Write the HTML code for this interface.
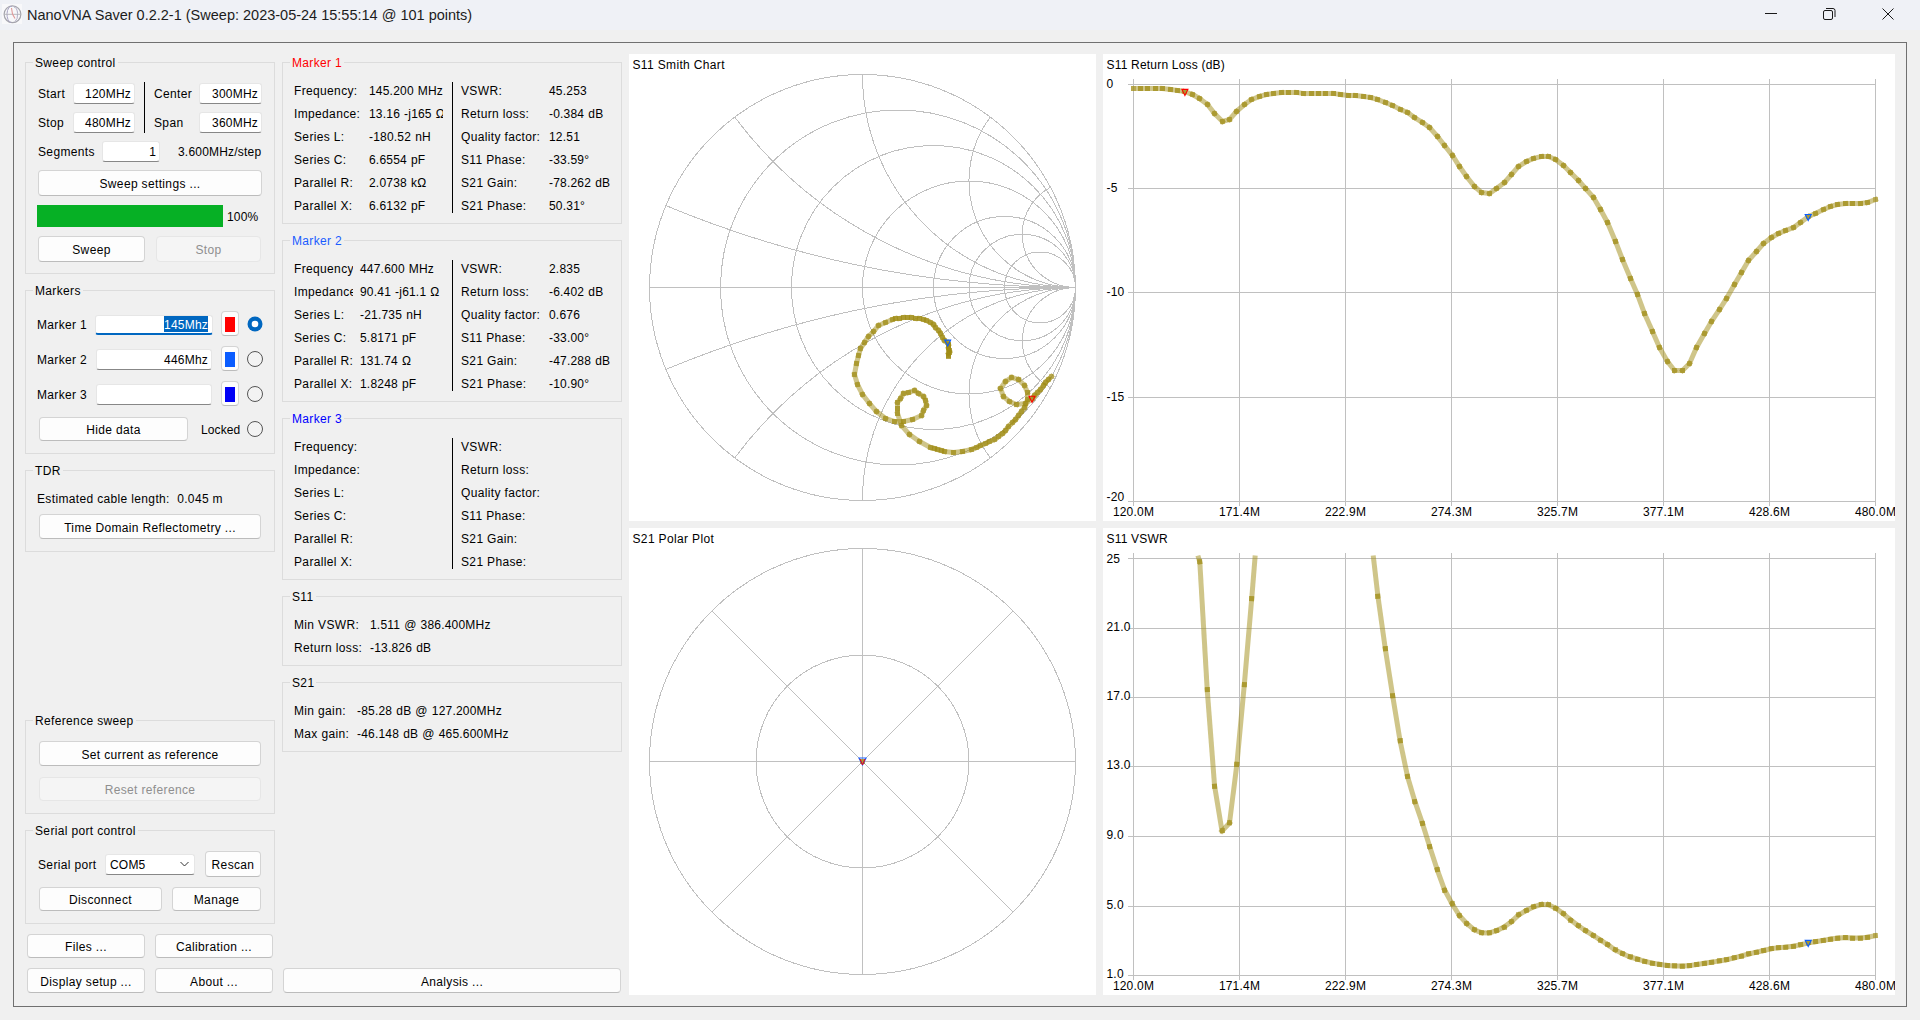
<!DOCTYPE html>
<html><head><meta charset="utf-8"><title>NanoVNA Saver</title><style>
*{box-sizing:border-box;margin:0;padding:0}
html,body{width:1920px;height:1020px;overflow:hidden;background:#f0f0f0;font-family:"Liberation Sans",sans-serif;font-size:12px;color:#000}
.t{position:absolute;line-height:14px;height:14px;white-space:pre;letter-spacing:0.35px}
.n{letter-spacing:0.2px;word-spacing:0.5px}
.gb{position:absolute;border:1px solid #dcdcdc}
.gt{background:#f0f0f0}
.btn{position:absolute;background:#fdfdfd;border:1px solid #d4d4d4;border-bottom-color:#bcbcbc;border-radius:4px}
.btn.dis{background:#f5f5f5;border-color:#e6e6e6}
.dtx{color:#8f8f8f}
.le{position:absolute;background:#fff;border:1px solid #e6e6e6;border-bottom:1px solid #878787;border-radius:3px}
.le.foc{border-bottom:2px solid #0067c0}
.chart{position:absolute;background:#fff}
svg{position:absolute;left:0;top:0}
</style></head><body>
<div style="position:absolute;left:0;top:0;width:1920px;height:30px;background:#eff1f6"></div>
<svg width="26" height="30" style="left:0;top:0"><rect x="2" y="4" width="20" height="20" fill="#f8f8fa"/>
<circle cx="12.5" cy="14.3" r="8.4" fill="none" stroke="#a4a4ac" stroke-width="1.2"/>
<path d="M12 6.2 A4.5 8.2 0 0 0 11 22.5" fill="none" stroke="#a8a4c4" stroke-width="1"/>
<path d="M14 7 A4 7.5 0 0 1 15 21.5" fill="none" stroke="#b4b0c8" stroke-width="1"/>
<path d="M4.5 14.3 H20.5" fill="none" stroke="#b0b0b6" stroke-width="0.9"/>
<path d="M11.5 8 L12.5 14 L15 18.5" fill="none" stroke="#e09a9a" stroke-width="1.1"/></svg>
<div class="t" style="left:27px;top:6px;font-size:14.5px;line-height:18px;height:18px;letter-spacing:0;color:#1c1c1c">NanoVNA Saver 0.2.2-1 (Sweep: 2023-05-24 15:55:14 @ 101 points)</div>
<svg width="1920" height="30" style="left:0;top:0">
<line x1="1765" y1="13.5" x2="1777" y2="13.5" stroke="#1a1a1a" stroke-width="1"/>
<rect x="1823.5" y="10.5" width="9" height="9" rx="1.5" fill="none" stroke="#1a1a1a" stroke-width="1"/>
<path d="M1826 8.5 H1833 Q1835 8.5 1835 10.5 V17" fill="none" stroke="#1a1a1a" stroke-width="1"/>
<path d="M1882.5 8.5 L1893.5 19.5 M1893.5 8.5 L1882.5 19.5" stroke="#1a1a1a" stroke-width="1"/>
</svg>
<div style="position:absolute;left:13px;top:42px;width:1894px;height:965px;border:1px solid #707070"></div>
<div class="gb" style="left:25px;top:62px;width:250px;height:212px;"></div><div class="t gt" style="left:33px;top:56px;padding:0 2px;">Sweep control</div>
<div class="t " style="left:38px;top:87px;">Start</div>
<div class="le" style="left:73px;top:83px;width:62px;height:21px;"></div>
<div class="t n" style="left:11px;top:87px;width:120px;text-align:right;">120MHz</div>
<div class="t " style="left:38px;top:116px;">Stop</div>
<div class="le" style="left:73px;top:112px;width:62px;height:21px;"></div>
<div class="t n" style="left:11px;top:116px;width:120px;text-align:right;">480MHz</div>
<div style="position:absolute;left:144px;top:82px;width:1px;height:51px;background:#000"></div>
<div class="t " style="left:154px;top:87px;">Center</div>
<div class="le" style="left:199px;top:83px;width:63px;height:21px;"></div>
<div class="t n" style="left:138px;top:87px;width:120px;text-align:right;">300MHz</div>
<div class="t " style="left:154px;top:116px;">Span</div>
<div class="le" style="left:199px;top:112px;width:63px;height:21px;"></div>
<div class="t n" style="left:138px;top:116px;width:120px;text-align:right;">360MHz</div>
<div class="t " style="left:38px;top:145px;">Segments</div>
<div class="le" style="left:102px;top:141px;width:58px;height:21px;"></div>
<div class="t n" style="left:36px;top:145px;width:120px;text-align:right;">1</div>
<div class="t n" style="left:178px;top:145px;">3.600MHz/step</div>
<div class="btn" style="left:38px;top:170px;width:224px;height:26px;"></div><div class="t " style="left:38px;top:177px;width:224px;text-align:center;">Sweep settings ...</div>
<div style="position:absolute;left:37px;top:205px;width:186px;height:22px;background:#06b025"></div>
<div class="t n" style="left:227px;top:210px;">100%</div>
<div class="btn" style="left:38px;top:236px;width:107px;height:26px;"></div><div class="t " style="left:38px;top:243px;width:107px;text-align:center;">Sweep</div>
<div class="btn dis" style="left:156px;top:236px;width:105px;height:26px;"></div><div class="t dtx" style="left:156px;top:243px;width:105px;text-align:center;">Stop</div>
<div class="gb" style="left:25px;top:290px;width:250px;height:164px;"></div><div class="t gt" style="left:33px;top:284px;padding:0 2px;">Markers</div>
<div class="t " style="left:37px;top:318px;">Marker 1</div>
<div class="le foc" style="left:95px;top:315px;width:118px;height:20px;"></div>
<div style="position:absolute;left:164px;top:316px;width:44px;height:16px;background:#0067c0"></div>
<div class="t n" style="left:88px;top:318px;width:120px;text-align:right;color:#fff;">145Mhz</div>
<div class="t " style="left:37px;top:353px;">Marker 2</div>
<div class="le" style="left:96px;top:349px;width:116px;height:21px;"></div>
<div class="t n" style="left:88px;top:353px;width:120px;text-align:right;">446Mhz</div>
<div class="t " style="left:37px;top:388px;">Marker 3</div>
<div class="le" style="left:96px;top:384px;width:116px;height:21px;"></div>
<div class="btn" style="left:221px;top:311px;width:18px;height:25px;"></div>
<div class="" style="left:225px;top:317px;width:10px;height:15px;position:absolute;background:#ff0000"></div>
<div class="btn" style="left:221px;top:346px;width:18px;height:25px;"></div>
<div class="" style="left:225px;top:352px;width:10px;height:15px;position:absolute;background:#0a5cff"></div>
<div class="btn" style="left:221px;top:381px;width:18px;height:25px;"></div>
<div class="" style="left:225px;top:387px;width:10px;height:15px;position:absolute;background:#0000f5"></div>
<svg width="300" height="460" style="left:0;top:0">
<circle cx="255" cy="324" r="7.5" fill="#0067c0"/><circle cx="255" cy="324" r="3.3" fill="#fff"/>
<circle cx="255" cy="359" r="7.5" fill="#f3f3f3" stroke="#555" stroke-width="1"/>
<circle cx="255" cy="394" r="7.5" fill="#f3f3f3" stroke="#555" stroke-width="1"/>
<circle cx="255" cy="429" r="7.5" fill="#f3f3f3" stroke="#555" stroke-width="1"/>
</svg>
<div class="btn" style="left:39px;top:417px;width:149px;height:24px;"></div><div class="t " style="left:39px;top:423px;width:149px;text-align:center;">Hide data</div>
<div class="t " style="left:201px;top:423px;letter-spacing:0.1px">Locked</div>
<div class="gb" style="left:25px;top:470px;width:250px;height:82px;"></div><div class="t gt" style="left:33px;top:464px;padding:0 2px;">TDR</div>
<div class="t " style="left:37px;top:492px;">Estimated cable length:  0.045 m</div>
<div class="btn" style="left:39px;top:514px;width:222px;height:25px;"></div><div class="t " style="left:39px;top:521px;width:222px;text-align:center;">Time Domain Reflectometry ...</div>
<div class="gb" style="left:25px;top:720px;width:250px;height:94px;"></div><div class="t gt" style="left:33px;top:714px;padding:0 2px;">Reference sweep</div>
<div class="btn" style="left:39px;top:741px;width:222px;height:25px;"></div><div class="t " style="left:39px;top:748px;width:222px;text-align:center;">Set current as reference</div>
<div class="btn dis" style="left:39px;top:777px;width:222px;height:24px;"></div><div class="t dtx" style="left:39px;top:783px;width:222px;text-align:center;">Reset reference</div>
<div class="gb" style="left:25px;top:830px;width:250px;height:94px;"></div><div class="t gt" style="left:33px;top:824px;padding:0 2px;">Serial port control</div>
<div class="t " style="left:38px;top:858px;">Serial port</div>
<div class="le" style="left:105px;top:854px;width:90px;height:21px;"></div>
<div class="t n" style="left:110px;top:858px;">COM5</div>
<svg width="300" height="1020" style="left:0;top:0"><path d="M180.5 862 L184.5 866 L188.5 862" fill="none" stroke="#333" stroke-width="1"/></svg>
<div class="btn" style="left:205px;top:851px;width:56px;height:26px;"></div><div class="t " style="left:205px;top:858px;width:56px;text-align:center;">Rescan</div>
<div class="btn" style="left:39px;top:887px;width:123px;height:24px;"></div><div class="t " style="left:39px;top:893px;width:123px;text-align:center;">Disconnect</div>
<div class="btn" style="left:172px;top:887px;width:89px;height:24px;"></div><div class="t " style="left:172px;top:893px;width:89px;text-align:center;">Manage</div>
<div class="btn" style="left:27px;top:934px;width:118px;height:24px;"></div><div class="t " style="left:27px;top:940px;width:118px;text-align:center;">Files ...</div>
<div class="btn" style="left:155px;top:934px;width:118px;height:24px;"></div><div class="t " style="left:155px;top:940px;width:118px;text-align:center;">Calibration ...</div>
<div class="btn" style="left:27px;top:968px;width:118px;height:25px;"></div><div class="t " style="left:27px;top:975px;width:118px;text-align:center;">Display setup ...</div>
<div class="btn" style="left:155px;top:968px;width:118px;height:25px;"></div><div class="t " style="left:155px;top:975px;width:118px;text-align:center;">About ...</div>
<div class="btn" style="left:283px;top:968px;width:338px;height:25px;"></div><div class="t " style="left:283px;top:975px;width:338px;text-align:center;">Analysis ...</div>
<div class="gb" style="left:282px;top:62px;width:340px;height:162px;"></div><div class="t gt" style="left:290px;top:56px;padding:0 2px;color:#ff0000;">Marker 1</div><div class="t " style="left:294px;top:84px;">Frequency:</div><div class="t n" style="left:369px;top:84px;">145.200 MHz</div><div class="t " style="left:294px;top:107px;">Impedance:</div><div style="position:absolute;left:369px;top:107px;width:74px;height:16px;overflow:hidden"><div class="t n" style="left:0px;top:0px;">13.16 -j165 Ω</div></div><div class="t " style="left:294px;top:130px;">Series L:</div><div class="t n" style="left:369px;top:130px;">-180.52 nH</div><div class="t " style="left:294px;top:153px;">Series C:</div><div class="t n" style="left:369px;top:153px;">6.6554 pF</div><div class="t " style="left:294px;top:176px;">Parallel R:</div><div class="t n" style="left:369px;top:176px;">2.0738 kΩ</div><div class="t " style="left:294px;top:199px;">Parallel X:</div><div class="t n" style="left:369px;top:199px;">6.6132 pF</div><div class="t " style="left:461px;top:84px;">VSWR:</div><div class="t n" style="left:549px;top:84px;">45.253</div><div class="t " style="left:461px;top:107px;">Return loss:</div><div class="t n" style="left:549px;top:107px;">-0.384 dB</div><div class="t " style="left:461px;top:130px;">Quality factor:</div><div class="t n" style="left:549px;top:130px;">12.51</div><div class="t " style="left:461px;top:153px;">S11 Phase:</div><div class="t n" style="left:549px;top:153px;">-33.59°</div><div class="t " style="left:461px;top:176px;">S21 Gain:</div><div class="t n" style="left:549px;top:176px;">-78.262 dB</div><div class="t " style="left:461px;top:199px;">S21 Phase:</div><div class="t n" style="left:549px;top:199px;">50.31°</div><div style="position:absolute;left:452px;top:82px;width:1px;height:131px;background:#000"></div>
<div class="gb" style="left:282px;top:240px;width:340px;height:162px;"></div><div class="t gt" style="left:290px;top:234px;padding:0 2px;color:#1a5cff;">Marker 2</div><div style="position:absolute;left:294px;top:262px;width:59px;height:16px;overflow:hidden"><div class="t " style="left:0px;top:0px;">Frequency:</div></div><div class="t n" style="left:360px;top:262px;">447.600 MHz</div><div style="position:absolute;left:294px;top:285px;width:59px;height:16px;overflow:hidden"><div class="t " style="left:0px;top:0px;">Impedance:</div></div><div class="t n" style="left:360px;top:285px;">90.41 -j61.1 Ω</div><div style="position:absolute;left:294px;top:308px;width:59px;height:16px;overflow:hidden"><div class="t " style="left:0px;top:0px;">Series L:</div></div><div class="t n" style="left:360px;top:308px;">-21.735 nH</div><div style="position:absolute;left:294px;top:331px;width:59px;height:16px;overflow:hidden"><div class="t " style="left:0px;top:0px;">Series C:</div></div><div class="t n" style="left:360px;top:331px;">5.8171 pF</div><div style="position:absolute;left:294px;top:354px;width:59px;height:16px;overflow:hidden"><div class="t " style="left:0px;top:0px;">Parallel R:</div></div><div class="t n" style="left:360px;top:354px;">131.74 Ω</div><div style="position:absolute;left:294px;top:377px;width:59px;height:16px;overflow:hidden"><div class="t " style="left:0px;top:0px;">Parallel X:</div></div><div class="t n" style="left:360px;top:377px;">1.8248 pF</div><div class="t " style="left:461px;top:262px;">VSWR:</div><div class="t n" style="left:549px;top:262px;">2.835</div><div class="t " style="left:461px;top:285px;">Return loss:</div><div class="t n" style="left:549px;top:285px;">-6.402 dB</div><div class="t " style="left:461px;top:308px;">Quality factor:</div><div class="t n" style="left:549px;top:308px;">0.676</div><div class="t " style="left:461px;top:331px;">S11 Phase:</div><div class="t n" style="left:549px;top:331px;">-33.00°</div><div class="t " style="left:461px;top:354px;">S21 Gain:</div><div class="t n" style="left:549px;top:354px;">-47.288 dB</div><div class="t " style="left:461px;top:377px;">S21 Phase:</div><div class="t n" style="left:549px;top:377px;">-10.90°</div><div style="position:absolute;left:452px;top:260px;width:1px;height:131px;background:#000"></div>
<div class="gb" style="left:282px;top:418px;width:340px;height:162px;"></div><div class="t gt" style="left:290px;top:412px;padding:0 2px;color:#0000ff;">Marker 3</div><div class="t " style="left:294px;top:440px;">Frequency:</div><div class="t " style="left:294px;top:463px;">Impedance:</div><div class="t " style="left:294px;top:486px;">Series L:</div><div class="t " style="left:294px;top:509px;">Series C:</div><div class="t " style="left:294px;top:532px;">Parallel R:</div><div class="t " style="left:294px;top:555px;">Parallel X:</div><div class="t " style="left:461px;top:440px;">VSWR:</div><div class="t " style="left:461px;top:463px;">Return loss:</div><div class="t " style="left:461px;top:486px;">Quality factor:</div><div class="t " style="left:461px;top:509px;">S11 Phase:</div><div class="t " style="left:461px;top:532px;">S21 Gain:</div><div class="t " style="left:461px;top:555px;">S21 Phase:</div><div style="position:absolute;left:452px;top:438px;width:1px;height:131px;background:#000"></div>
<div class="gb" style="left:282px;top:596px;width:340px;height:70px;"></div><div class="t gt" style="left:290px;top:590px;padding:0 2px;">S11</div>
<div class="t " style="left:294px;top:618px;">Min VSWR:</div>
<div class="t n" style="left:370px;top:618px;">1.511 @ 386.400MHz</div>
<div class="t " style="left:294px;top:641px;">Return loss:</div>
<div class="t n" style="left:370px;top:641px;">-13.826 dB</div>
<div class="gb" style="left:282px;top:682px;width:340px;height:70px;"></div><div class="t gt" style="left:290px;top:676px;padding:0 2px;">S21</div>
<div class="t " style="left:294px;top:704px;">Min gain:</div>
<div class="t n" style="left:357px;top:704px;">-85.28 dB @ 127.200MHz</div>
<div class="t " style="left:294px;top:727px;">Max gain:</div>
<div class="t n" style="left:357px;top:727px;">-46.148 dB @ 465.600MHz</div>
<div class="chart" style="left:629px;top:54px;width:467px;height:467px"></div>
<svg width="1920" height="1020" style="left:0;top:0;font-family:'Liberation Sans',sans-serif;font-size:12px;letter-spacing:0.35px"><text x="632.5" y="68.8" text-anchor="start" >S11 Smith Chart</text><g stroke="#c0c0c0" stroke-width="1" fill="none" shape-rendering="crispEdges"><circle cx="862.5" cy="287.5" r="213.0"/><line x1="649.5" y1="287.5" x2="1075.5" y2="287.5"/><circle cx="898.00" cy="287.5" r="177.50"/><circle cx="933.50" cy="287.5" r="142.00"/><circle cx="969.00" cy="287.5" r="106.50"/><circle cx="1004.50" cy="287.5" r="71.00"/><circle cx="1022.25" cy="287.5" r="53.25"/><circle cx="1040.00" cy="287.5" r="35.50"/><path d="M1075.5 287.5 A1065.00 1065.00 0 0 1 665.88 205.58"/><path d="M1075.5 287.5 A1065.00 1065.00 0 0 0 665.88 369.42"/><path d="M1075.5 287.5 A426.00 426.00 0 0 1 734.70 117.10"/><path d="M1075.5 287.5 A426.00 426.00 0 0 0 734.70 457.90"/><path d="M1075.5 287.5 A213.00 213.00 0 0 1 862.50 74.50"/><path d="M1075.5 287.5 A213.00 213.00 0 0 0 862.50 500.50"/><path d="M1075.5 287.5 A106.50 106.50 0 0 1 990.30 117.10"/><path d="M1075.5 287.5 A106.50 106.50 0 0 0 990.30 457.90"/><path d="M1075.5 287.5 A53.25 53.25 0 0 1 1050.44 187.26"/><path d="M1075.5 287.5 A53.25 53.25 0 0 0 1050.44 387.74"/></g><g stroke="rgba(160,140,20,0.5)" stroke-width="5" stroke-linecap="square" fill="none"><line x1="1051.5" y1="376.5" x2="1048.5" y2="379.5"/><line x1="1048.5" y1="379.5" x2="1045.5" y2="382.5"/><line x1="1045.5" y1="382.5" x2="1043.5" y2="385.5"/><line x1="1043.5" y1="385.5" x2="1040.5" y2="389.5"/><line x1="1040.5" y1="389.5" x2="1037.5" y2="392.5"/><line x1="1037.5" y1="392.5" x2="1034.5" y2="395.5"/><line x1="1034.5" y1="395.5" x2="1032.5" y2="398.5"/><line x1="1032.5" y1="398.5" x2="1025.5" y2="403.5"/><line x1="1025.5" y1="403.5" x2="1016.5" y2="404.5"/><line x1="1016.5" y1="404.5" x2="1009.5" y2="401.5"/><line x1="1009.5" y1="401.5" x2="1003.5" y2="396.5"/><line x1="1003.5" y1="396.5" x2="1000.5" y2="388.5"/><line x1="1000.5" y1="388.5" x2="1005.5" y2="381.5"/><line x1="1005.5" y1="381.5" x2="1011.5" y2="377.5"/><line x1="1011.5" y1="377.5" x2="1018.5" y2="379.5"/><line x1="1018.5" y1="379.5" x2="1024.5" y2="385.5"/><line x1="1024.5" y1="385.5" x2="1027.5" y2="392.5"/><line x1="1027.5" y1="392.5" x2="1027.5" y2="399.5"/><line x1="1027.5" y1="399.5" x2="1024.5" y2="407.5"/><line x1="1024.5" y1="407.5" x2="1021.5" y2="411.5"/><line x1="1021.5" y1="411.5" x2="1018.5" y2="415.5"/><line x1="1018.5" y1="415.5" x2="1015.5" y2="419.5"/><line x1="1015.5" y1="419.5" x2="1012.5" y2="422.5"/><line x1="1012.5" y1="422.5" x2="1008.5" y2="426.5"/><line x1="1008.5" y1="426.5" x2="1005.5" y2="430.5"/><line x1="1005.5" y1="430.5" x2="1002.5" y2="433.5"/><line x1="1002.5" y1="433.5" x2="998.5" y2="436.5"/><line x1="998.5" y1="436.5" x2="994.5" y2="439.5"/><line x1="994.5" y1="439.5" x2="989.5" y2="441.5"/><line x1="989.5" y1="441.5" x2="985.5" y2="443.5"/><line x1="985.5" y1="443.5" x2="980.5" y2="445.5"/><line x1="980.5" y1="445.5" x2="976.5" y2="447.5"/><line x1="976.5" y1="447.5" x2="971.5" y2="449.5"/><line x1="971.5" y1="449.5" x2="962.5" y2="451.5"/><line x1="962.5" y1="451.5" x2="953.5" y2="452.5"/><line x1="953.5" y1="452.5" x2="944.5" y2="451.5"/><line x1="944.5" y1="451.5" x2="941.5" y2="450.5"/><line x1="941.5" y1="450.5" x2="937.5" y2="449.5"/><line x1="937.5" y1="449.5" x2="934.5" y2="448.5"/><line x1="934.5" y1="448.5" x2="930.5" y2="447.5"/><line x1="930.5" y1="447.5" x2="919.5" y2="441.5"/><line x1="919.5" y1="441.5" x2="909.5" y2="434.5"/><line x1="909.5" y1="434.5" x2="901.5" y2="425.5"/><line x1="901.5" y1="425.5" x2="897.5" y2="413.5"/><line x1="897.5" y1="413.5" x2="897.5" y2="408.5"/><line x1="897.5" y1="408.5" x2="897.5" y2="402.5"/><line x1="897.5" y1="402.5" x2="900.5" y2="398.5"/><line x1="900.5" y1="398.5" x2="903.5" y2="393.5"/><line x1="903.5" y1="393.5" x2="908.5" y2="392.5"/><line x1="908.5" y1="392.5" x2="914.5" y2="390.5"/><line x1="914.5" y1="390.5" x2="918.5" y2="393.5"/><line x1="918.5" y1="393.5" x2="923.5" y2="396.5"/><line x1="923.5" y1="396.5" x2="925.5" y2="400.5"/><line x1="925.5" y1="400.5" x2="926.5" y2="405.5"/><line x1="926.5" y1="405.5" x2="923.5" y2="410.5"/><line x1="923.5" y1="410.5" x2="921.5" y2="415.5"/><line x1="921.5" y1="415.5" x2="912.5" y2="419.5"/><line x1="912.5" y1="419.5" x2="903.5" y2="421.5"/><line x1="903.5" y1="421.5" x2="894.5" y2="421.5"/><line x1="894.5" y1="421.5" x2="885.5" y2="418.5"/><line x1="885.5" y1="418.5" x2="876.5" y2="411.5"/><line x1="876.5" y1="411.5" x2="869.5" y2="403.5"/><line x1="869.5" y1="403.5" x2="862.5" y2="394.5"/><line x1="862.5" y1="394.5" x2="857.5" y2="384.5"/><line x1="857.5" y1="384.5" x2="854.5" y2="374.5"/><line x1="854.5" y1="374.5" x2="856.5" y2="363.5"/><line x1="856.5" y1="363.5" x2="858.5" y2="355.5"/><line x1="858.5" y1="355.5" x2="860.5" y2="348.5"/><line x1="860.5" y1="348.5" x2="864.5" y2="342.5"/><line x1="864.5" y1="342.5" x2="868.5" y2="336.5"/><line x1="868.5" y1="336.5" x2="873.5" y2="331.5"/><line x1="873.5" y1="331.5" x2="878.5" y2="325.5"/><line x1="878.5" y1="325.5" x2="885.5" y2="322.5"/><line x1="885.5" y1="322.5" x2="892.5" y2="319.5"/><line x1="892.5" y1="319.5" x2="895.5" y2="318.5"/><line x1="895.5" y1="318.5" x2="899.5" y2="318.5"/><line x1="899.5" y1="318.5" x2="903.5" y2="317.5"/><line x1="903.5" y1="317.5" x2="907.5" y2="317.5"/><line x1="907.5" y1="317.5" x2="911.5" y2="317.5"/><line x1="911.5" y1="317.5" x2="915.5" y2="318.5"/><line x1="915.5" y1="318.5" x2="919.5" y2="318.5"/><line x1="919.5" y1="318.5" x2="923.5" y2="319.5"/><line x1="923.5" y1="319.5" x2="926.5" y2="320.5"/><line x1="926.5" y1="320.5" x2="930.5" y2="322.5"/><line x1="930.5" y1="322.5" x2="933.5" y2="324.5"/><line x1="933.5" y1="324.5" x2="935.5" y2="327.5"/><line x1="935.5" y1="327.5" x2="938.5" y2="330.5"/><line x1="938.5" y1="330.5" x2="940.5" y2="333.5"/><line x1="940.5" y1="333.5" x2="942.5" y2="337.5"/><line x1="942.5" y1="337.5" x2="944.5" y2="340.5"/><line x1="944.5" y1="340.5" x2="947.5" y2="342.5"/><line x1="947.5" y1="342.5" x2="948.5" y2="344.5"/><line x1="948.5" y1="344.5" x2="948.5" y2="345.5"/><line x1="948.5" y1="345.5" x2="948.5" y2="347.5"/><line x1="948.5" y1="347.5" x2="948.5" y2="348.5"/><line x1="948.5" y1="348.5" x2="949.5" y2="350.5"/><line x1="949.5" y1="350.5" x2="949.5" y2="352.5"/><line x1="949.5" y1="352.5" x2="948.5" y2="353.5"/><line x1="948.5" y1="353.5" x2="948.5" y2="355.5"/><line x1="948.5" y1="355.5" x2="948.5" y2="356.5"/></g><g fill="rgba(160,140,20,0.5)" shape-rendering="crispEdges"><rect x="1049" y="374" width="5" height="5"/><rect x="1046" y="377" width="5" height="5"/><rect x="1043" y="380" width="5" height="5"/><rect x="1041" y="383" width="5" height="5"/><rect x="1038" y="387" width="5" height="5"/><rect x="1035" y="390" width="5" height="5"/><rect x="1032" y="393" width="5" height="5"/><rect x="1030" y="396" width="5" height="5"/><rect x="1023" y="401" width="5" height="5"/><rect x="1014" y="402" width="5" height="5"/><rect x="1007" y="399" width="5" height="5"/><rect x="1001" y="394" width="5" height="5"/><rect x="998" y="386" width="5" height="5"/><rect x="1003" y="379" width="5" height="5"/><rect x="1009" y="375" width="5" height="5"/><rect x="1016" y="377" width="5" height="5"/><rect x="1022" y="383" width="5" height="5"/><rect x="1025" y="390" width="5" height="5"/><rect x="1025" y="397" width="5" height="5"/><rect x="1022" y="405" width="5" height="5"/><rect x="1019" y="409" width="5" height="5"/><rect x="1016" y="413" width="5" height="5"/><rect x="1013" y="417" width="5" height="5"/><rect x="1010" y="420" width="5" height="5"/><rect x="1006" y="424" width="5" height="5"/><rect x="1003" y="428" width="5" height="5"/><rect x="1000" y="431" width="5" height="5"/><rect x="996" y="434" width="5" height="5"/><rect x="992" y="437" width="5" height="5"/><rect x="987" y="439" width="5" height="5"/><rect x="983" y="441" width="5" height="5"/><rect x="978" y="443" width="5" height="5"/><rect x="974" y="445" width="5" height="5"/><rect x="969" y="447" width="5" height="5"/><rect x="960" y="449" width="5" height="5"/><rect x="951" y="450" width="5" height="5"/><rect x="942" y="449" width="5" height="5"/><rect x="939" y="448" width="5" height="5"/><rect x="935" y="447" width="5" height="5"/><rect x="932" y="446" width="5" height="5"/><rect x="928" y="445" width="5" height="5"/><rect x="917" y="439" width="5" height="5"/><rect x="907" y="432" width="5" height="5"/><rect x="899" y="423" width="5" height="5"/><rect x="895" y="411" width="5" height="5"/><rect x="895" y="406" width="5" height="5"/><rect x="895" y="400" width="5" height="5"/><rect x="898" y="396" width="5" height="5"/><rect x="901" y="391" width="5" height="5"/><rect x="906" y="390" width="5" height="5"/><rect x="912" y="388" width="5" height="5"/><rect x="916" y="391" width="5" height="5"/><rect x="921" y="394" width="5" height="5"/><rect x="923" y="398" width="5" height="5"/><rect x="924" y="403" width="5" height="5"/><rect x="921" y="408" width="5" height="5"/><rect x="919" y="413" width="5" height="5"/><rect x="910" y="417" width="5" height="5"/><rect x="901" y="419" width="5" height="5"/><rect x="892" y="419" width="5" height="5"/><rect x="883" y="416" width="5" height="5"/><rect x="874" y="409" width="5" height="5"/><rect x="867" y="401" width="5" height="5"/><rect x="860" y="392" width="5" height="5"/><rect x="855" y="382" width="5" height="5"/><rect x="852" y="372" width="5" height="5"/><rect x="854" y="361" width="5" height="5"/><rect x="856" y="353" width="5" height="5"/><rect x="858" y="346" width="5" height="5"/><rect x="862" y="340" width="5" height="5"/><rect x="866" y="334" width="5" height="5"/><rect x="871" y="329" width="5" height="5"/><rect x="876" y="323" width="5" height="5"/><rect x="883" y="320" width="5" height="5"/><rect x="890" y="317" width="5" height="5"/><rect x="893" y="316" width="5" height="5"/><rect x="897" y="316" width="5" height="5"/><rect x="901" y="315" width="5" height="5"/><rect x="905" y="315" width="5" height="5"/><rect x="909" y="315" width="5" height="5"/><rect x="913" y="316" width="5" height="5"/><rect x="917" y="316" width="5" height="5"/><rect x="921" y="317" width="5" height="5"/><rect x="924" y="318" width="5" height="5"/><rect x="928" y="320" width="5" height="5"/><rect x="931" y="322" width="5" height="5"/><rect x="933" y="325" width="5" height="5"/><rect x="936" y="328" width="5" height="5"/><rect x="938" y="331" width="5" height="5"/><rect x="940" y="335" width="5" height="5"/><rect x="942" y="338" width="5" height="5"/><rect x="945" y="340" width="5" height="5"/><rect x="946" y="342" width="5" height="5"/><rect x="946" y="343" width="5" height="5"/><rect x="946" y="345" width="5" height="5"/><rect x="946" y="346" width="5" height="5"/><rect x="947" y="348" width="5" height="5"/><rect x="947" y="350" width="5" height="5"/><rect x="946" y="351" width="5" height="5"/><rect x="946" y="353" width="5" height="5"/><rect x="946" y="354" width="5" height="5"/></g><path d="M1029.0 396.3 H1035.0 L1032.0 402.3 Z" fill="none" stroke="#ff0000" stroke-width="1.1"/><path d="M944.7 340.1 H950.7 L947.7 346.1 Z" fill="none" stroke="#0a5cff" stroke-width="1.1"/></svg>
<div class="chart" style="left:1103px;top:54px;width:792px;height:467px"></div>
<svg width="1920" height="1020" style="left:0;top:0;font-family:'Liberation Sans',sans-serif;font-size:12px;letter-spacing:0.2px"><defs><clipPath id="cp110354"><rect x="1103" y="54" width="792" height="467"/></clipPath></defs><g clip-path="url(#cp110354)"><text x="1106.5" y="68.7" text-anchor="start" >S11 Return Loss (dB)</text><g stroke="#c0c0c0" stroke-width="1" shape-rendering="crispEdges"><line x1="1133.5" y1="79" x2="1133.5" y2="506"/><line x1="1239.5" y1="79" x2="1239.5" y2="506"/><line x1="1345.5" y1="79" x2="1345.5" y2="506"/><line x1="1451.5" y1="79" x2="1451.5" y2="506"/><line x1="1557.5" y1="79" x2="1557.5" y2="506"/><line x1="1663.5" y1="79" x2="1663.5" y2="506"/><line x1="1769.5" y1="79" x2="1769.5" y2="506"/><line x1="1875.5" y1="79" x2="1875.5" y2="506"/><line x1="1128" y1="84.5" x2="1876" y2="84.5"/><line x1="1128" y1="188.5" x2="1876" y2="188.5"/><line x1="1128" y1="292.5" x2="1876" y2="292.5"/><line x1="1128" y1="397.5" x2="1876" y2="397.5"/><line x1="1128" y1="501.5" x2="1876" y2="501.5"/></g><text x="1106.5" y="88" text-anchor="start" >0</text><text x="1106.5" y="191.6" text-anchor="start" >-5</text><text x="1106.5" y="295.6" text-anchor="start" >-10</text><text x="1106.5" y="400.6" text-anchor="start" >-15</text><text x="1106.5" y="501" text-anchor="start" >-20</text><text x="1133.5" y="515.8" text-anchor="middle" >120.0M</text><text x="1239.5" y="515.8" text-anchor="middle" >171.4M</text><text x="1345.5" y="515.8" text-anchor="middle" >222.9M</text><text x="1451.5" y="515.8" text-anchor="middle" >274.3M</text><text x="1557.5" y="515.8" text-anchor="middle" >325.7M</text><text x="1663.5" y="515.8" text-anchor="middle" >377.1M</text><text x="1769.5" y="515.8" text-anchor="middle" >428.6M</text><text x="1875.5" y="515.8" text-anchor="middle" >480.0M</text><g stroke="rgba(160,140,20,0.5)" stroke-width="5" stroke-linecap="square" fill="none"><line x1="1133.5" y1="88.5" x2="1140.5" y2="88.5"/><line x1="1140.5" y1="88.5" x2="1147.5" y2="88.5"/><line x1="1147.5" y1="88.5" x2="1155.5" y2="88.5"/><line x1="1155.5" y1="88.5" x2="1162.5" y2="88.5"/><line x1="1162.5" y1="88.5" x2="1170.5" y2="89.5"/><line x1="1170.5" y1="89.5" x2="1177.5" y2="90.5"/><line x1="1177.5" y1="90.5" x2="1184.5" y2="91.5"/><line x1="1184.5" y1="91.5" x2="1192.5" y2="94.5"/><line x1="1192.5" y1="94.5" x2="1199.5" y2="98.5"/><line x1="1199.5" y1="98.5" x2="1207.5" y2="104.5"/><line x1="1207.5" y1="104.5" x2="1214.5" y2="113.5"/><line x1="1214.5" y1="113.5" x2="1222.5" y2="121.5"/><line x1="1222.5" y1="121.5" x2="1229.5" y2="119.5"/><line x1="1229.5" y1="119.5" x2="1236.5" y2="111.5"/><line x1="1236.5" y1="111.5" x2="1244.5" y2="104.5"/><line x1="1244.5" y1="104.5" x2="1251.5" y2="99.5"/><line x1="1251.5" y1="99.5" x2="1259.5" y2="96.5"/><line x1="1259.5" y1="96.5" x2="1266.5" y2="94.5"/><line x1="1266.5" y1="94.5" x2="1273.5" y2="93.5"/><line x1="1273.5" y1="93.5" x2="1281.5" y2="92.5"/><line x1="1281.5" y1="92.5" x2="1288.5" y2="92.5"/><line x1="1288.5" y1="92.5" x2="1296.5" y2="92.5"/><line x1="1296.5" y1="92.5" x2="1303.5" y2="93.5"/><line x1="1303.5" y1="93.5" x2="1311.5" y2="93.5"/><line x1="1311.5" y1="93.5" x2="1318.5" y2="93.5"/><line x1="1318.5" y1="93.5" x2="1325.5" y2="93.5"/><line x1="1325.5" y1="93.5" x2="1333.5" y2="93.5"/><line x1="1333.5" y1="93.5" x2="1340.5" y2="94.5"/><line x1="1340.5" y1="94.5" x2="1348.5" y2="95.5"/><line x1="1348.5" y1="95.5" x2="1355.5" y2="95.5"/><line x1="1355.5" y1="95.5" x2="1363.5" y2="96.5"/><line x1="1363.5" y1="96.5" x2="1370.5" y2="97.5"/><line x1="1370.5" y1="97.5" x2="1377.5" y2="99.5"/><line x1="1377.5" y1="99.5" x2="1385.5" y2="102.5"/><line x1="1385.5" y1="102.5" x2="1392.5" y2="105.5"/><line x1="1392.5" y1="105.5" x2="1400.5" y2="109.5"/><line x1="1400.5" y1="109.5" x2="1407.5" y2="112.5"/><line x1="1407.5" y1="112.5" x2="1414.5" y2="117.5"/><line x1="1414.5" y1="117.5" x2="1422.5" y2="122.5"/><line x1="1422.5" y1="122.5" x2="1429.5" y2="127.5"/><line x1="1429.5" y1="127.5" x2="1437.5" y2="136.5"/><line x1="1437.5" y1="136.5" x2="1444.5" y2="145.5"/><line x1="1444.5" y1="145.5" x2="1452.5" y2="155.5"/><line x1="1452.5" y1="155.5" x2="1459.5" y2="166.5"/><line x1="1459.5" y1="166.5" x2="1466.5" y2="176.5"/><line x1="1466.5" y1="176.5" x2="1474.5" y2="186.5"/><line x1="1474.5" y1="186.5" x2="1481.5" y2="192.5"/><line x1="1481.5" y1="192.5" x2="1489.5" y2="193.5"/><line x1="1489.5" y1="193.5" x2="1496.5" y2="188.5"/><line x1="1496.5" y1="188.5" x2="1504.5" y2="182.5"/><line x1="1504.5" y1="182.5" x2="1511.5" y2="174.5"/><line x1="1511.5" y1="174.5" x2="1518.5" y2="166.5"/><line x1="1518.5" y1="166.5" x2="1526.5" y2="161.5"/><line x1="1526.5" y1="161.5" x2="1533.5" y2="158.5"/><line x1="1533.5" y1="158.5" x2="1541.5" y2="156.5"/><line x1="1541.5" y1="156.5" x2="1548.5" y2="156.5"/><line x1="1548.5" y1="156.5" x2="1555.5" y2="159.5"/><line x1="1555.5" y1="159.5" x2="1563.5" y2="165.5"/><line x1="1563.5" y1="165.5" x2="1570.5" y2="172.5"/><line x1="1570.5" y1="172.5" x2="1578.5" y2="180.5"/><line x1="1578.5" y1="180.5" x2="1585.5" y2="188.5"/><line x1="1585.5" y1="188.5" x2="1593.5" y2="197.5"/><line x1="1593.5" y1="197.5" x2="1600.5" y2="209.5"/><line x1="1600.5" y1="209.5" x2="1607.5" y2="222.5"/><line x1="1607.5" y1="222.5" x2="1615.5" y2="241.5"/><line x1="1615.5" y1="241.5" x2="1622.5" y2="259.5"/><line x1="1622.5" y1="259.5" x2="1630.5" y2="278.5"/><line x1="1630.5" y1="278.5" x2="1637.5" y2="294.5"/><line x1="1637.5" y1="294.5" x2="1644.5" y2="313.5"/><line x1="1644.5" y1="313.5" x2="1652.5" y2="331.5"/><line x1="1652.5" y1="331.5" x2="1659.5" y2="347.5"/><line x1="1659.5" y1="347.5" x2="1667.5" y2="361.5"/><line x1="1667.5" y1="361.5" x2="1674.5" y2="370.5"/><line x1="1674.5" y1="370.5" x2="1682.5" y2="370.5"/><line x1="1682.5" y1="370.5" x2="1689.5" y2="363.5"/><line x1="1689.5" y1="363.5" x2="1696.5" y2="347.5"/><line x1="1696.5" y1="347.5" x2="1704.5" y2="333.5"/><line x1="1704.5" y1="333.5" x2="1711.5" y2="321.5"/><line x1="1711.5" y1="321.5" x2="1719.5" y2="309.5"/><line x1="1719.5" y1="309.5" x2="1726.5" y2="298.5"/><line x1="1726.5" y1="298.5" x2="1734.5" y2="284.5"/><line x1="1734.5" y1="284.5" x2="1741.5" y2="272.5"/><line x1="1741.5" y1="272.5" x2="1748.5" y2="260.5"/><line x1="1748.5" y1="260.5" x2="1756.5" y2="251.5"/><line x1="1756.5" y1="251.5" x2="1763.5" y2="243.5"/><line x1="1763.5" y1="243.5" x2="1771.5" y2="237.5"/><line x1="1771.5" y1="237.5" x2="1778.5" y2="233.5"/><line x1="1778.5" y1="233.5" x2="1785.5" y2="230.5"/><line x1="1785.5" y1="230.5" x2="1793.5" y2="227.5"/><line x1="1793.5" y1="227.5" x2="1800.5" y2="222.5"/><line x1="1800.5" y1="222.5" x2="1808.5" y2="216.5"/><line x1="1808.5" y1="216.5" x2="1815.5" y2="213.5"/><line x1="1815.5" y1="213.5" x2="1823.5" y2="209.5"/><line x1="1823.5" y1="209.5" x2="1830.5" y2="206.5"/><line x1="1830.5" y1="206.5" x2="1837.5" y2="204.5"/><line x1="1837.5" y1="204.5" x2="1845.5" y2="203.5"/><line x1="1845.5" y1="203.5" x2="1852.5" y2="203.5"/><line x1="1852.5" y1="203.5" x2="1860.5" y2="203.5"/><line x1="1860.5" y1="203.5" x2="1867.5" y2="202.5"/><line x1="1867.5" y1="202.5" x2="1875.5" y2="199.5"/></g><g fill="rgba(160,140,20,0.5)" shape-rendering="crispEdges"><rect x="1131" y="86" width="5" height="5"/><rect x="1138" y="86" width="5" height="5"/><rect x="1145" y="86" width="5" height="5"/><rect x="1153" y="86" width="5" height="5"/><rect x="1160" y="86" width="5" height="5"/><rect x="1168" y="87" width="5" height="5"/><rect x="1175" y="88" width="5" height="5"/><rect x="1182" y="89" width="5" height="5"/><rect x="1190" y="92" width="5" height="5"/><rect x="1197" y="96" width="5" height="5"/><rect x="1205" y="102" width="5" height="5"/><rect x="1212" y="111" width="5" height="5"/><rect x="1220" y="119" width="5" height="5"/><rect x="1227" y="117" width="5" height="5"/><rect x="1234" y="109" width="5" height="5"/><rect x="1242" y="102" width="5" height="5"/><rect x="1249" y="97" width="5" height="5"/><rect x="1257" y="94" width="5" height="5"/><rect x="1264" y="92" width="5" height="5"/><rect x="1271" y="91" width="5" height="5"/><rect x="1279" y="90" width="5" height="5"/><rect x="1286" y="90" width="5" height="5"/><rect x="1294" y="90" width="5" height="5"/><rect x="1301" y="91" width="5" height="5"/><rect x="1309" y="91" width="5" height="5"/><rect x="1316" y="91" width="5" height="5"/><rect x="1323" y="91" width="5" height="5"/><rect x="1331" y="91" width="5" height="5"/><rect x="1338" y="92" width="5" height="5"/><rect x="1346" y="93" width="5" height="5"/><rect x="1353" y="93" width="5" height="5"/><rect x="1361" y="94" width="5" height="5"/><rect x="1368" y="95" width="5" height="5"/><rect x="1375" y="97" width="5" height="5"/><rect x="1383" y="100" width="5" height="5"/><rect x="1390" y="103" width="5" height="5"/><rect x="1398" y="107" width="5" height="5"/><rect x="1405" y="110" width="5" height="5"/><rect x="1412" y="115" width="5" height="5"/><rect x="1420" y="120" width="5" height="5"/><rect x="1427" y="125" width="5" height="5"/><rect x="1435" y="134" width="5" height="5"/><rect x="1442" y="143" width="5" height="5"/><rect x="1450" y="153" width="5" height="5"/><rect x="1457" y="164" width="5" height="5"/><rect x="1464" y="174" width="5" height="5"/><rect x="1472" y="184" width="5" height="5"/><rect x="1479" y="190" width="5" height="5"/><rect x="1487" y="191" width="5" height="5"/><rect x="1494" y="186" width="5" height="5"/><rect x="1502" y="180" width="5" height="5"/><rect x="1509" y="172" width="5" height="5"/><rect x="1516" y="164" width="5" height="5"/><rect x="1524" y="159" width="5" height="5"/><rect x="1531" y="156" width="5" height="5"/><rect x="1539" y="154" width="5" height="5"/><rect x="1546" y="154" width="5" height="5"/><rect x="1553" y="157" width="5" height="5"/><rect x="1561" y="163" width="5" height="5"/><rect x="1568" y="170" width="5" height="5"/><rect x="1576" y="178" width="5" height="5"/><rect x="1583" y="186" width="5" height="5"/><rect x="1591" y="195" width="5" height="5"/><rect x="1598" y="207" width="5" height="5"/><rect x="1605" y="220" width="5" height="5"/><rect x="1613" y="239" width="5" height="5"/><rect x="1620" y="257" width="5" height="5"/><rect x="1628" y="276" width="5" height="5"/><rect x="1635" y="292" width="5" height="5"/><rect x="1642" y="311" width="5" height="5"/><rect x="1650" y="329" width="5" height="5"/><rect x="1657" y="345" width="5" height="5"/><rect x="1665" y="359" width="5" height="5"/><rect x="1672" y="368" width="5" height="5"/><rect x="1680" y="368" width="5" height="5"/><rect x="1687" y="361" width="5" height="5"/><rect x="1694" y="345" width="5" height="5"/><rect x="1702" y="331" width="5" height="5"/><rect x="1709" y="319" width="5" height="5"/><rect x="1717" y="307" width="5" height="5"/><rect x="1724" y="296" width="5" height="5"/><rect x="1732" y="282" width="5" height="5"/><rect x="1739" y="270" width="5" height="5"/><rect x="1746" y="258" width="5" height="5"/><rect x="1754" y="249" width="5" height="5"/><rect x="1761" y="241" width="5" height="5"/><rect x="1769" y="235" width="5" height="5"/><rect x="1776" y="231" width="5" height="5"/><rect x="1783" y="228" width="5" height="5"/><rect x="1791" y="225" width="5" height="5"/><rect x="1798" y="220" width="5" height="5"/><rect x="1806" y="214" width="5" height="5"/><rect x="1813" y="211" width="5" height="5"/><rect x="1821" y="207" width="5" height="5"/><rect x="1828" y="204" width="5" height="5"/><rect x="1835" y="202" width="5" height="5"/><rect x="1843" y="201" width="5" height="5"/><rect x="1850" y="201" width="5" height="5"/><rect x="1858" y="201" width="5" height="5"/><rect x="1865" y="200" width="5" height="5"/><rect x="1873" y="197" width="5" height="5"/></g><path d="M1181.9 89.4 H1187.9 L1184.9 95.4 Z" fill="none" stroke="#ff0000" stroke-width="1.1"/><path d="M1805.2 214.5 H1811.2 L1808.2 220.5 Z" fill="none" stroke="#0a5cff" stroke-width="1.1"/></g></svg>
<div class="chart" style="left:629px;top:528px;width:467px;height:467px"></div>
<svg width="1920" height="1020" style="left:0;top:0;font-family:'Liberation Sans',sans-serif;font-size:12px;letter-spacing:0.35px"><text x="632.5" y="542.8" text-anchor="start" >S21 Polar Plot</text><g stroke="#c0c0c0" stroke-width="1" fill="none" shape-rendering="crispEdges"><circle cx="862.5" cy="761.5" r="213.0"/><circle cx="862.5" cy="761.5" r="106.5"/><line x1="649.5" y1="761.5" x2="1075.5" y2="761.5"/><line x1="862.5" y1="548.5" x2="862.5" y2="974.5"/><line x1="711.9" y1="610.9" x2="1013.1" y2="912.1"/><line x1="711.9" y1="912.1" x2="1013.1" y2="610.9"/></g><rect x="860.0" y="759.0" width="5" height="5" fill="rgba(160,140,20,0.8)"/><path d="M859.0 758.0 H866.0 L862.5 765.0 Z" fill="none" stroke="#1f63ff" stroke-width="1.2"/><path d="M860.0 759.0 L862.5 765.0 L865.0 759.0" fill="none" stroke="#ff0000" stroke-width="1"/></svg>
<div class="chart" style="left:1103px;top:528px;width:792px;height:467px"></div>
<svg width="1920" height="1020" style="left:0;top:0;font-family:'Liberation Sans',sans-serif;font-size:12px;letter-spacing:0.2px"><defs><clipPath id="cpv"><rect x="1103" y="528" width="792" height="467"/></clipPath></defs><g clip-path="url(#cpv)"><text x="1106.5" y="542.8" text-anchor="start" >S11 VSWR</text><g stroke="#c0c0c0" stroke-width="1" shape-rendering="crispEdges"><line x1="1133.5" y1="553" x2="1133.5" y2="980"/><line x1="1239.5" y1="553" x2="1239.5" y2="980"/><line x1="1345.5" y1="553" x2="1345.5" y2="980"/><line x1="1451.5" y1="553" x2="1451.5" y2="980"/><line x1="1557.5" y1="553" x2="1557.5" y2="980"/><line x1="1663.5" y1="553" x2="1663.5" y2="980"/><line x1="1769.5" y1="553" x2="1769.5" y2="980"/><line x1="1875.5" y1="553" x2="1875.5" y2="980"/><line x1="1128" y1="558.5" x2="1876" y2="558.5"/><line x1="1128" y1="628.5" x2="1876" y2="628.5"/><line x1="1128" y1="697.5" x2="1876" y2="697.5"/><line x1="1128" y1="766.5" x2="1876" y2="766.5"/><line x1="1128" y1="836.5" x2="1876" y2="836.5"/><line x1="1128" y1="906.5" x2="1876" y2="906.5"/><line x1="1128" y1="975.5" x2="1876" y2="975.5"/></g><text x="1106.5" y="562.5" text-anchor="start" >25</text><text x="1106.5" y="631.4" text-anchor="start" >21.0</text><text x="1106.5" y="700.4" text-anchor="start" >17.0</text><text x="1106.5" y="769.4" text-anchor="start" >13.0</text><text x="1106.5" y="839.4" text-anchor="start" >9.0</text><text x="1106.5" y="909.4" text-anchor="start" >5.0</text><text x="1106.5" y="977.6" text-anchor="start" >1.0</text><text x="1133.5" y="989.6" text-anchor="middle" >120.0M</text><text x="1239.5" y="989.6" text-anchor="middle" >171.4M</text><text x="1345.5" y="989.6" text-anchor="middle" >222.9M</text><text x="1451.5" y="989.6" text-anchor="middle" >274.3M</text><text x="1557.5" y="989.6" text-anchor="middle" >325.7M</text><text x="1663.5" y="989.6" text-anchor="middle" >377.1M</text><text x="1769.5" y="989.6" text-anchor="middle" >428.6M</text><text x="1875.5" y="989.6" text-anchor="middle" >480.0M</text><g stroke="rgba(160,140,20,0.5)" stroke-width="5" stroke-linecap="square"><line x1="1198.6" y1="558.0" x2="1199.8" y2="562.0"/><line x1="1199.8" y1="562.0" x2="1207.2" y2="689.7"/><line x1="1207.2" y1="689.7" x2="1214.6" y2="786.1"/><line x1="1214.6" y1="786.1" x2="1222.0" y2="831.0"/><line x1="1222.0" y1="831.0" x2="1229.5" y2="823.0"/><line x1="1229.5" y1="823.0" x2="1236.9" y2="764.1"/><line x1="1236.9" y1="764.1" x2="1244.3" y2="684.7"/><line x1="1244.3" y1="684.7" x2="1251.7" y2="598.8"/><line x1="1251.7" y1="598.8" x2="1255.0" y2="558.0"/><line x1="1373.5" y1="558.0" x2="1377.9" y2="596.1"/><line x1="1377.9" y1="596.1" x2="1385.3" y2="648.9"/><line x1="1385.3" y1="648.9" x2="1392.7" y2="696.0"/><line x1="1392.7" y1="696.0" x2="1400.1" y2="741.0"/><line x1="1400.1" y1="741.0" x2="1407.5" y2="776.4"/><line x1="1407.5" y1="776.4" x2="1415.0" y2="801.9"/><line x1="1415.0" y1="801.9" x2="1422.4" y2="823.3"/><line x1="1422.4" y1="823.3" x2="1429.8" y2="846.9"/><line x1="1429.8" y1="846.9" x2="1437.2" y2="869.7"/><line x1="1437.2" y1="869.7" x2="1444.6" y2="890.0"/><line x1="1444.6" y1="890.0" x2="1452.1" y2="903.8"/><line x1="1452.1" y1="903.8" x2="1459.5" y2="915.6"/><line x1="1459.5" y1="915.6" x2="1466.9" y2="923.7"/><line x1="1466.9" y1="923.7" x2="1474.3" y2="929.8"/><line x1="1474.3" y1="929.8" x2="1481.7" y2="932.7"/><line x1="1481.7" y1="932.7" x2="1489.2" y2="932.9"/><line x1="1489.2" y1="932.9" x2="1496.6" y2="930.6"/><line x1="1496.6" y1="930.6" x2="1504.0" y2="927.1"/><line x1="1504.0" y1="927.1" x2="1511.4" y2="921.7"/><line x1="1511.4" y1="921.7" x2="1518.8" y2="914.9"/><line x1="1518.8" y1="914.9" x2="1526.3" y2="910.4"/><line x1="1526.3" y1="910.4" x2="1533.7" y2="906.8"/><line x1="1533.7" y1="906.8" x2="1541.1" y2="904.5"/><line x1="1541.1" y1="904.5" x2="1548.5" y2="904.7"/><line x1="1548.5" y1="904.7" x2="1555.9" y2="908.3"/><line x1="1555.9" y1="908.3" x2="1563.4" y2="913.8"/><line x1="1563.4" y1="913.8" x2="1570.8" y2="920.1"/><line x1="1570.8" y1="920.1" x2="1578.2" y2="925.7"/><line x1="1578.2" y1="925.7" x2="1585.6" y2="930.7"/><line x1="1585.6" y1="930.7" x2="1593.0" y2="935.3"/><line x1="1593.0" y1="935.3" x2="1600.5" y2="940.1"/><line x1="1600.5" y1="940.1" x2="1607.9" y2="944.8"/><line x1="1607.9" y1="944.8" x2="1615.3" y2="950.0"/><line x1="1615.3" y1="950.0" x2="1622.7" y2="953.7"/><line x1="1622.7" y1="953.7" x2="1630.1" y2="957.0"/><line x1="1630.1" y1="957.0" x2="1637.6" y2="959.1"/><line x1="1637.6" y1="959.1" x2="1645.0" y2="961.4"/><line x1="1645.0" y1="961.4" x2="1652.4" y2="963.1"/><line x1="1652.4" y1="963.1" x2="1659.8" y2="964.4"/><line x1="1659.8" y1="964.4" x2="1667.2" y2="965.4"/><line x1="1667.2" y1="965.4" x2="1674.7" y2="966.0"/><line x1="1674.7" y1="966.0" x2="1682.1" y2="966.0"/><line x1="1682.1" y1="966.0" x2="1689.5" y2="965.6"/><line x1="1689.5" y1="965.6" x2="1696.9" y2="964.4"/><line x1="1696.9" y1="964.4" x2="1704.3" y2="963.3"/><line x1="1704.3" y1="963.3" x2="1711.8" y2="962.2"/><line x1="1711.8" y1="962.2" x2="1719.2" y2="961.0"/><line x1="1719.2" y1="961.0" x2="1726.6" y2="959.7"/><line x1="1726.6" y1="959.7" x2="1734.0" y2="957.9"/><line x1="1734.0" y1="957.9" x2="1741.4" y2="956.0"/><line x1="1741.4" y1="956.0" x2="1748.9" y2="953.9"/><line x1="1748.9" y1="953.9" x2="1756.3" y2="952.2"/><line x1="1756.3" y1="952.2" x2="1763.7" y2="950.5"/><line x1="1763.7" y1="950.5" x2="1771.1" y2="948.8"/><line x1="1771.1" y1="948.8" x2="1778.5" y2="947.8"/><line x1="1778.5" y1="947.8" x2="1786.0" y2="947.1"/><line x1="1786.0" y1="947.1" x2="1793.4" y2="946.3"/><line x1="1793.4" y1="946.3" x2="1800.8" y2="944.7"/><line x1="1800.8" y1="944.7" x2="1808.2" y2="942.9"/><line x1="1808.2" y1="942.9" x2="1815.6" y2="941.6"/><line x1="1815.6" y1="941.6" x2="1823.1" y2="940.4"/><line x1="1823.1" y1="940.4" x2="1830.5" y2="939.1"/><line x1="1830.5" y1="939.1" x2="1837.9" y2="938.1"/><line x1="1837.9" y1="938.1" x2="1845.3" y2="937.6"/><line x1="1845.3" y1="937.6" x2="1852.7" y2="938.0"/><line x1="1852.7" y1="938.0" x2="1860.2" y2="938.0"/><line x1="1860.2" y1="938.0" x2="1867.6" y2="937.3"/><line x1="1867.6" y1="937.3" x2="1875.0" y2="935.8"/></g><g fill="rgba(160,140,20,0.5)" shape-rendering="crispEdges"><rect x="1197" y="559" width="5" height="5"/><rect x="1205" y="687" width="5" height="5"/><rect x="1212" y="784" width="5" height="5"/><rect x="1220" y="828" width="5" height="5"/><rect x="1227" y="820" width="5" height="5"/><rect x="1234" y="762" width="5" height="5"/><rect x="1242" y="682" width="5" height="5"/><rect x="1249" y="596" width="5" height="5"/><rect x="1375" y="594" width="5" height="5"/><rect x="1383" y="646" width="5" height="5"/><rect x="1390" y="693" width="5" height="5"/><rect x="1398" y="738" width="5" height="5"/><rect x="1405" y="774" width="5" height="5"/><rect x="1412" y="799" width="5" height="5"/><rect x="1420" y="821" width="5" height="5"/><rect x="1427" y="844" width="5" height="5"/><rect x="1435" y="867" width="5" height="5"/><rect x="1442" y="888" width="5" height="5"/><rect x="1450" y="901" width="5" height="5"/><rect x="1457" y="913" width="5" height="5"/><rect x="1464" y="921" width="5" height="5"/><rect x="1472" y="927" width="5" height="5"/><rect x="1479" y="930" width="5" height="5"/><rect x="1487" y="930" width="5" height="5"/><rect x="1494" y="928" width="5" height="5"/><rect x="1502" y="925" width="5" height="5"/><rect x="1509" y="919" width="5" height="5"/><rect x="1516" y="912" width="5" height="5"/><rect x="1524" y="908" width="5" height="5"/><rect x="1531" y="904" width="5" height="5"/><rect x="1539" y="902" width="5" height="5"/><rect x="1546" y="902" width="5" height="5"/><rect x="1553" y="906" width="5" height="5"/><rect x="1561" y="911" width="5" height="5"/><rect x="1568" y="918" width="5" height="5"/><rect x="1576" y="923" width="5" height="5"/><rect x="1583" y="928" width="5" height="5"/><rect x="1591" y="933" width="5" height="5"/><rect x="1598" y="938" width="5" height="5"/><rect x="1605" y="942" width="5" height="5"/><rect x="1613" y="947" width="5" height="5"/><rect x="1620" y="951" width="5" height="5"/><rect x="1628" y="954" width="5" height="5"/><rect x="1635" y="957" width="5" height="5"/><rect x="1642" y="959" width="5" height="5"/><rect x="1650" y="961" width="5" height="5"/><rect x="1657" y="962" width="5" height="5"/><rect x="1665" y="963" width="5" height="5"/><rect x="1672" y="963" width="5" height="5"/><rect x="1680" y="964" width="5" height="5"/><rect x="1687" y="963" width="5" height="5"/><rect x="1694" y="962" width="5" height="5"/><rect x="1702" y="961" width="5" height="5"/><rect x="1709" y="960" width="5" height="5"/><rect x="1717" y="958" width="5" height="5"/><rect x="1724" y="957" width="5" height="5"/><rect x="1732" y="955" width="5" height="5"/><rect x="1739" y="954" width="5" height="5"/><rect x="1746" y="951" width="5" height="5"/><rect x="1754" y="950" width="5" height="5"/><rect x="1761" y="948" width="5" height="5"/><rect x="1769" y="946" width="5" height="5"/><rect x="1776" y="945" width="5" height="5"/><rect x="1783" y="945" width="5" height="5"/><rect x="1791" y="944" width="5" height="5"/><rect x="1798" y="942" width="5" height="5"/><rect x="1806" y="940" width="5" height="5"/><rect x="1813" y="939" width="5" height="5"/><rect x="1821" y="938" width="5" height="5"/><rect x="1828" y="937" width="5" height="5"/><rect x="1835" y="936" width="5" height="5"/><rect x="1843" y="935" width="5" height="5"/><rect x="1850" y="936" width="5" height="5"/><rect x="1858" y="936" width="5" height="5"/><rect x="1865" y="935" width="5" height="5"/><rect x="1873" y="933" width="5" height="5"/></g><path d="M1805.2 940.4 H1811.2 L1808.2 946.4 Z" fill="none" stroke="#0a5cff" stroke-width="1.1"/></g></svg>
</body></html>
